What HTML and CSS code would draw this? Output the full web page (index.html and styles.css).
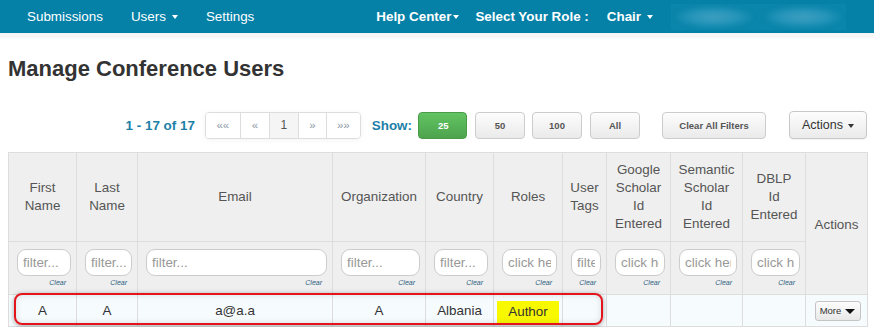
FILE: index.html
```html
<!DOCTYPE html>
<html>
<head>
<meta charset="utf-8">
<title>Manage Conference Users</title>
<link rel="stylesheet" href="styles.css">
</head>
<body>
<div class="nav">
  <span class="nav-item">Submissions</span>
  <span class="nav-item nav-users">Users<i class="caret"></i></span>
  <span class="nav-item nav-settings">Settings</span>
  <span class="nav-item bold nav-help">Help Center<i class="caret tight"></i></span>
  <span class="nav-item bold nav-role">Select Your Role :</span>
  <span class="nav-item bold nav-chair">Chair<i class="caret"></i></span>
  <span class="blurred"><i class="blob"></i><i class="blob"></i></span>
</div>
<div class="band"></div>
<div class="main">
  <h1 class="title">Manage Conference Users</h1>
  <div class="toolbar">
    <span class="info">1 - 17 of 17</span>
    <div class="pager">
      <span class="pg w34">&laquo;&laquo;</span>
      <span class="pg w29">&laquo;</span>
      <span class="pg w29 active">1</span>
      <span class="pg w28">&raquo;</span>
      <span class="pg w35">&raquo;&raquo;</span>
    </div>
    <span class="show">Show:</span>
    <span class="btn green">25</span>
    <span class="btn size s50">50</span>
    <span class="btn size s100">100</span>
    <span class="btn size sall">All</span>
    <span class="btn clear-all">Clear All Filters</span>
    <span class="btn actions">Actions<i class="caret dark"></i></span>
  </div>
  <div class="table-wrap">
    <table class="grid">
      <colgroup>
        <col class="c68"><col class="c61"><col class="c195"><col class="c93"><col class="c68"><col class="c69"><col class="c44"><col class="c64"><col class="c72"><col class="c63"><col class="c62">
      </colgroup>
      <thead>
        <tr class="head">
          <th>First<br>Name</th>
          <th>Last<br>Name</th>
          <th>Email</th>
          <th>Organization</th>
          <th>Country</th>
          <th>Roles</th>
          <th>User<br>Tags</th>
          <th>Google<br>Scholar<br>Id<br>Entered</th>
          <th>Semantic<br>Scholar<br>Id<br>Entered</th>
          <th>DBLP<br>Id<br>Entered</th>
          <th rowspan="2">Actions</th>
        </tr>
        <tr class="filters">
          <td><input class="filter" placeholder="filter..."><div class="clear">Clear</div></td>
          <td><input class="filter" placeholder="filter..."><div class="clear">Clear</div></td>
          <td><input class="filter" placeholder="filter..."><div class="clear">Clear</div></td>
          <td><input class="filter" placeholder="filter..."><div class="clear">Clear</div></td>
          <td><input class="filter" placeholder="filter..."><div class="clear">Clear</div></td>
          <td><input class="filter" placeholder="click here..."><div class="clear">Clear</div></td>
          <td><input class="filter" placeholder="filter..."><div class="clear">Clear</div></td>
          <td><input class="filter" placeholder="click here..."><div class="clear">Clear</div></td>
          <td><input class="filter" placeholder="click here..."><div class="clear">Clear</div></td>
          <td><input class="filter" placeholder="click here..."><div class="clear">Clear</div></td>
        </tr>
      </thead>
      <tbody>
        <tr class="row">
          <td>A</td>
          <td>A</td>
          <td>a@a.a</td>
          <td>A</td>
          <td>Albania</td>
          <td><span class="role-tag">Author</span></td>
          <td></td>
          <td></td>
          <td></td>
          <td></td>
          <td><span class="more">More<i class="caret black"></i></span></td>
        </tr>
      </tbody>
    </table>
    <div class="highlight"></div>
  </div>
</div>
</body>
</html>
```

FILE: styles.css
```css
* { box-sizing: border-box; }
html, body { margin: 0; padding: 0; background: #fff; }
body {
  font-family: "Liberation Sans", Arial, sans-serif;
  font-size: 13.4px;
  color: #333;
  overflow: hidden;
}

/* navbar */
.nav {
  height: 33px;
  background: #0581a8;
  display: flex;
  align-items: center;
  padding-left: 27px;
  color: #fff;
}
.nav-item {
  font-size: 13.4px;
  line-height: 33px;
  white-space: nowrap;
  display: flex;
  align-items: center;
  flex: none;
}
.nav-item.bold { font-weight: bold; }
.nav-users { margin-left: 28px; }
.nav-settings { margin-left: 28px; }
.nav-help { margin-left: 122px; }
.nav-role { margin-left: 16px; }
.nav-chair { margin-left: 18px; }
.caret {
  display: inline-block;
  width: 0;
  height: 0;
  border-left: 3.5px solid transparent;
  border-right: 3.5px solid transparent;
  border-top: 4px solid #fff;
  margin-left: 6px;
  margin-top: 1px;
}
.caret.tight { margin-left: 2px; }
.caret.dark { border-top-color: #333; margin-left: 5px; }
.caret.black {
  border-top-color: #111;
  border-left-width: 5px;
  border-right-width: 5px;
  border-top-width: 5px;
  margin-left: 4px;
}
.blurred {
  flex: none;
  margin-left: 18px;
  width: 175px;
  height: 26px;
  background: #0a85ab;
  display: flex;
  align-items: center;
  justify-content: space-between;
  padding: 0 4px;
  overflow: hidden;
}
.blob {
  display: block;
  width: 78px;
  height: 22px;
  border-radius: 50%;
  background: radial-gradient(ellipse at center, #3e9fc0 0%, #2594b9 45%, rgba(10,133,171,0) 75%);
  filter: blur(2px);
}
.band { height: 5px; background: #f7f7f7; }

/* main */
.main { padding: 0 7px 0 8px; }
.title {
  margin: 18px 0 0 0;
  font-size: 22px;
  line-height: 26px;
  font-weight: bold;
  color: #333;
}
.toolbar {
  margin-top: 29px;
  width: 859px;
  height: 28px;
  display: flex;
  align-items: center;
  justify-content: flex-end;
}
.info, .show {
  color: #1d7fa8;
  font-weight: bold;
  font-size: 13.4px;
  white-space: nowrap;
}
.info { margin-right: 10px; }
.show { margin-left: 11px; margin-right: 6px; }
.pager {
  display: flex;
  height: 27px;
  border: 1px solid #ddd;
  border-radius: 4px;
  overflow: hidden;
  box-shadow: 0 1px 6px rgba(0,0,0,0.05);
}
.pg {
  display: flex;
  align-items: center;
  justify-content: center;
  height: 100%;
  font-size: 11.5px;
  color: #8c98a4;
  border-left: 1px solid #ddd;
  background: #fff;
}
.pg:first-child { border-left: none; }
.pg.active { background: #f5f5f5; color: #555; font-size: 12px; }
.w34 { width: 34px; }
.w29 { width: 29px; }
.w28 { width: 28px; }
.w35 { width: 34px; }
.btn {
  display: flex;
  align-items: center;
  justify-content: center;
  height: 27px;
  border: 1px solid #ccc;
  border-radius: 4px;
  background: linear-gradient(#fdfdfd, #eaeaea);
  color: #555;
  font-weight: bold;
  font-size: 9.5px;
  white-space: nowrap;
}
.btn.green {
  width: 49px;
  background: linear-gradient(#62c462, #4da34d);
  border-color: #4a9a4a;
  color: #fff;
  justify-content: flex-start;
  padding-left: 19px;
}
.btn.size { width: 50px; }
.s50 { margin-left: 8px; }
.s100 { margin-left: 7px; }
.sall { margin-left: 8px; }
.clear-all { width: 104px; margin-left: 22px; }
.btn.actions {
  width: 78px;
  height: 28px;
  margin-left: 23px;
  font-weight: normal;
  font-size: 12.5px;
  color: #333;
  border-color: #c8c8c8;
  box-shadow: 0 1px 1px rgba(0,0,0,0.05);
}

/* table */
.table-wrap { position: relative; margin-top: 13px; width: 859px; }
.grid {
  width: 859px;
  table-layout: fixed;
  border-collapse: collapse;
  border: 1px solid #ddd;
}
.c68 { width: 68px; } .c61 { width: 61px; } .c195 { width: 195px; } .c93 { width: 93px; }
.c69 { width: 69px; } .c44 { width: 44px; } .c64 { width: 64px; } .c72 { width: 72px; }
.c63 { width: 63px; } .c62 { width: 62px; }
.grid th, .grid td { border: 1px solid #ddd; }
.head th {
  height: 89px;
  background: #efefef;
  color: #555;
  font-weight: normal;
  font-size: 13.4px;
  line-height: 18px;
  text-align: center;
  vertical-align: middle;
  padding: 0 2px;
}
.head th[rowspan] { padding-top: 2px; }
.filters td {
  height: 53px;
  background: #efefef;
  padding: 7px 5px 5px 8px;
  vertical-align: top;
}
.filter {
  display: block;
  width: 100%;
  height: 27px;
  border: 1px solid #ccc;
  border-radius: 9px;
  background: #fff;
  padding: 0 5px;
  font-family: "Liberation Sans", Arial, sans-serif;
  font-size: 13.4px;
  color: #555;
  outline: none;
}
.filter::placeholder { color: #999; }
.clear {
  margin-top: 2px;
  font-size: 7px;
  line-height: 10px;
  font-style: italic;
  color: #2c5f7e;
  text-align: right;
  padding-right: 5px;
}
.row td {
  height: 32px;
  background: #f6fbfd;
  text-align: center;
  vertical-align: middle;
  padding: 0;
  color: #333;
  font-size: 13.4px;
}
.role-tag {
  display: inline-block;
  background: #f8f800;
  padding: 3px 11px;
  line-height: 16px;
  margin-top: 2px;
}
.more {
  display: inline-flex;
  align-items: center;
  justify-content: center;
  width: 46px;
  height: 20px;
  margin-left: 2px;
  border: 1px solid #c4c4c4;
  border-radius: 3px;
  background: linear-gradient(#fdfdfd, #e8e8e8);
  font-size: 9.5px;
  color: #333;
}
.highlight {
  position: absolute;
  left: 6px;
  top: 141px;
  width: 589px;
  height: 32px;
  border: 2px solid #e3141c;
  border-radius: 8px;
  box-shadow: 0 1px 5px rgba(0,0,0,0.35), inset 0 0 6px rgba(0,0,0,0.12);
  pointer-events: none;
}
```
